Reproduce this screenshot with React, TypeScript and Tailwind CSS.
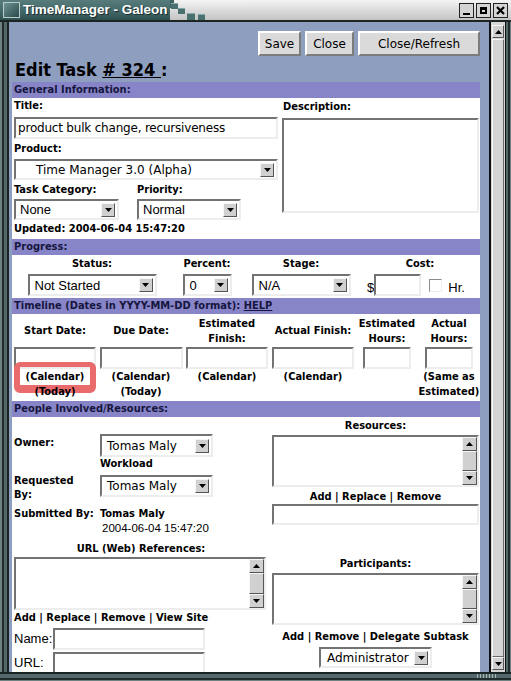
import React from 'react'

const BOLD =
  "font-['DejaVu_Sans_Condensed','DejaVu_Sans',sans-serif] font-stretch-condensed font-bold text-[11px] leading-[14px] whitespace-nowrap"
const DV = "font-['DejaVu_Sans',sans-serif] text-[12px] whitespace-nowrap"
const LS = "font-['Liberation_Sans',Arial,sans-serif] text-[13px] whitespace-nowrap"
const INSET =
  'border-2 border-t-[#737373] border-l-[#737373] border-b-[#ededed] border-r-[#ededed] bg-white'
const OUTSET =
  'border border-t-[#f6f6f6] border-l-[#f6f6f6] border-b-[#555555] border-r-[#555555] bg-[#d0d0d0]'

function Tri({ up = false }: { up?: boolean }) {
  return (
    <svg width="7" height="4" viewBox="0 0 7 4">
      <polygon points={up ? '0,4 7,4 3.5,0' : '0,0 7,0 3.5,4'} fill="#000" />
    </svg>
  )
}

function ArrowBtn({ up = false, className = '' }: { up?: boolean; className?: string }) {
  return (
    <div className={`flex items-center justify-center ${OUTSET} ${className}`}>
      <Tri up={up} />
    </div>
  )
}

function Select({ value, className, font = DV, pad = 'pl-[4px]' }: { value: string; className: string; font?: string; pad?: string }) {
  return (
    <div className={`${INSET} flex items-center ${className}`}>
      <span className={`flex-1 ${pad} ${font} leading-none`}>{value}</span>
      <ArrowBtn className="w-[14px] h-[14px] mr-[2px]" />
    </div>
  )
}

function Input({ className, value = '' }: { className: string; value?: string }) {
  return (
    <div className={`${INSET} flex items-center ${className}`}>
      <span className={`pl-[2px] ${DV} tracking-[-0.2px]`}>{value}</span>
    </div>
  )
}

function ListBox({ className }: { className: string }) {
  return (
    <div className={`${INSET} flex justify-end ${className}`}>
      <div className="w-[15px] flex flex-col bg-[#c4c4c4]">
        <ArrowBtn up className="h-[14px]" />
        <div className={`flex-1 ${OUTSET} bg-[#cdcdcd]`} />
        <ArrowBtn className="h-[14px]" />
      </div>
    </div>
  )
}

function Bar({ children }: { children: React.ReactNode }) {
  return <div className={`h-[16px] bg-[#8785c7] pl-[2px] ${BOLD} leading-[16px] text-[#16163e]`}>{children}</div>
}

function TitleBar() {
  return (
    <div className="h-[22px] flex relative bg-gradient-to-b from-[#f4f4f4] to-[#c4c4c4] border-b-2 border-[#1c2424]">
      <div className="w-[170px] shrink-0 h-full bg-gradient-to-b from-[#587c7c] via-[#456a6a] to-[#2f4f4f] flex items-center pl-[3px] gap-[3px]">
        <div className="w-[17px] h-[16px] shrink-0 bg-gradient-to-br from-[#6f9494] to-[#2c4a4a] border border-[#b9cccc]" />
        <span className="font-['Liberation_Sans',Arial,sans-serif] font-bold text-[13.5px] text-white [text-shadow:1px_1px_0_#1b2e2e] whitespace-nowrap">
          TimeManager - Galeon
        </span>
      </div>
      <svg width="40" height="20" viewBox="0 0 40 20" className="shrink-0">
        <rect x="0" y="0" width="4" height="8" fill="#3f6363" />
        <rect x="1" y="3" width="7" height="6" fill="#4b7070" />
        <rect x="8" y="8" width="7" height="6" fill="#4b7070" />
        <rect x="17" y="13" width="8" height="7" fill="#4b7070" />
        <rect x="28" y="14" width="7" height="6" fill="#4b7070" />
        <rect x="1" y="3" width="7" height="1" fill="#86a8a8" />
        <rect x="8" y="8" width="7" height="1" fill="#86a8a8" />
        <rect x="17" y="13" width="8" height="1" fill="#86a8a8" />
        <rect x="28" y="14" width="7" height="1" fill="#86a8a8" />
      </svg>
      <div className="flex-1" />
      <div className="flex gap-[2px] pt-[3px] pr-[3px]">
        <div className="w-[15px] h-[15px] bg-[#d4d4d4] border border-[#222] flex items-end justify-center pb-[2px]">
          <div className="w-[7px] h-[2px] bg-black" />
        </div>
        <div className="w-[15px] h-[15px] bg-[#d4d4d4] border border-[#222] flex items-center justify-center">
          <div className="w-[7px] h-[7px] border-2 border-t-[3px] border-black" />
        </div>
        <div className="w-[15px] h-[15px] bg-[#d4d4d4] border border-[#222] flex items-center justify-center">
          <svg width="9" height="9" viewBox="0 0 9 9">
            <path d="M1 1 L8 8 M8 1 L1 8" stroke="#000" strokeWidth="2.2" />
          </svg>
        </div>
      </div>
    </div>
  )
}

function WindowScrollbar() {
  return (
    <div className="w-[17px] h-full border-l-2 border-r border-[#111] bg-[#d6d6d6] flex flex-col pt-[3px] pb-[2px] px-[1px]">
      <ArrowBtn up className="h-[13px]" />
      <div className="flex-1 border border-t-[#f6f6f6] border-l-[#f6f6f6] border-b-[#6a6a6a] border-r-[#6a6a6a] bg-[#d4d4d4] mt-px" />
      <ArrowBtn className="h-[13px]" />
    </div>
  )
}

function GeneralInfo() {
  return (
    <div className="h-[141px] bg-white flex pl-[2px]">
      <div className="w-[268px]">
        <div className={`${BOLD} pt-[1px]`}>Title:</div>
        <Input className="w-[264px] h-[22px] mt-[4px]" value="product bulk change, recursiveness" />
        <div className={`${BOLD} mt-[3px]`}>Product:</div>
        <Select className="w-[264px] h-[21px] mt-[3px]" value="Time Manager 3.0 (Alpha)" pad="pl-[20px]" />
        <div className="flex mt-[3px]">
          <div className={`${BOLD} w-[123px]`}>Task Category:</div>
          <div className={BOLD}>Priority:</div>
        </div>
        <div className="flex mt-[2px]">
          <div className="w-[123px]">
            <Select className="w-[105px] h-[21px]" value="None" font={LS} />
          </div>
          <Select className="w-[104px] h-[21px]" value="Normal" font={LS} />
        </div>
        <div className={`${BOLD} mt-[2px]`}>Updated: 2004-06-04 15:47:20</div>
      </div>
      <div className="w-[198px]">
        <div className={`${BOLD} pt-[2px] pl-px`}>Description:</div>
        <div className={`${INSET} w-[197px] h-[95px] mt-[4px]`} />
      </div>
    </div>
  )
}

function Progress() {
  return (
    <div className="h-[43px] bg-white flex">
      <div className="w-[160px] flex flex-col items-center">
        <div className={`${BOLD} pt-[2px]`}>Status:</div>
        <Select className="w-[129px] h-[22px] mt-[3px]" value="Not Started" font={LS} pad="pl-[5px]" />
      </div>
      <div className="w-[70px] flex flex-col items-center">
        <div className={`${BOLD} pt-[2px]`}>Percent:</div>
        <Select className="w-[49px] h-[22px] mt-[3px]" value="0" font={LS} pad="pl-[5px]" />
      </div>
      <div className="w-[118px] flex flex-col items-center">
        <div className={`${BOLD} pt-[2px]`}>Stage:</div>
        <Select className="w-[99px] h-[22px] mt-[3px]" value="N/A" font={LS} pad="pl-[5px]" />
      </div>
      <div className="w-[120px] flex flex-col items-center">
        <div className={`${BOLD} pt-[2px]`}>Cost:</div>
        <div className="flex items-end mt-[3px] pr-[8px]">
          <span className={`${LS} text-[12px] leading-[16px] text-black`}>$</span>
          <div className={`${INSET} w-[47px] h-[22px]`} />
          <div className="w-[13px] h-[13px] ml-[8px] mb-[4px] border border-t-[#8a8a8a] border-l-[#8a8a8a] border-b-[#eeeeee] border-r-[#eeeeee] bg-white" />
          <span className={`${LS} leading-[16px] ml-[6px]`}>Hr.</span>
        </div>
      </div>
    </div>
  )
}

function Timeline() {
  const cols = [
    { w: 'w-[86px]', label: ['Start Date:'], input: 'w-[82px]', sub: ['(Calendar)', '(Today)'] },
    { w: 'w-[86px]', label: ['Due Date:'], input: 'w-[83px]', sub: ['(Calendar)', '(Today)'] },
    { w: 'w-[86px]', label: ['Estimated', 'Finish:'], input: 'w-[82px]', sub: ['(Calendar)'] },
    { w: 'w-[86px]', label: ['Actual Finish:'], input: 'w-[82px]', sub: ['(Calendar)'] },
    { w: 'w-[62px]', label: ['Estimated', 'Hours:'], input: 'w-[48px]', sub: [] },
    { w: 'w-[62px]', label: ['Actual', 'Hours:'], input: 'w-[48px]', sub: ['(Same as', 'Estimated)'] },
  ]
  return (
    <div className="h-[87px] bg-white flex relative">
      {cols.map((c, i) => (
        <div key={i} className={`${c.w} flex flex-col items-center`}>
          <div className="h-[33px] flex flex-col justify-center items-center">
            {c.label.map((l) => (
              <div key={l} className={`${BOLD} leading-[15px]`}>{l}</div>
            ))}
          </div>
          <div className={`${INSET} ${c.input} h-[22px]`} />
          {c.sub.map((s) => (
            <div key={s} className={`${BOLD} leading-[15px] relative z-10`}>{s}</div>
          ))}
        </div>
      ))}
      <div className="absolute left-[2px] top-[48px] w-[82px] h-[31px] rounded-[6px] border-[#e96b6b] border-t-[5px] border-x-[6px] border-b-[8px] pointer-events-none" />
    </div>
  )
}

function People() {
  return (
    <div className="h-[260px] bg-white flex">
      <div className="w-[259px] pl-[2px]">
        <div className="flex mt-[17px]">
          <div className={`${BOLD} w-[86px] pt-[2px]`}>Owner:</div>
          <Select className="w-[113px] h-[23px]" value="Tomas Maly" pad="pl-[5px]" />
        </div>
        <div className={`${BOLD} pl-[86px]`}>Workload</div>
        <div className="flex mt-[3px]">
          <div className={`${BOLD} w-[86px] leading-[13px] whitespace-normal`}>
            Requested
            <br />
            By:
          </div>
          <Select className="w-[113px] h-[22px] mt-px" value="Tomas Maly" pad="pl-[5px]" />
        </div>
        <div className="flex mt-[5px]">
          <div className={`${BOLD} w-[86px]`}>Submitted By:</div>
          <div>
            <div className={BOLD}>Tomas Maly</div>
            <div className="font-['Liberation_Sans',Arial,sans-serif] text-[11.5px] leading-[14px] pl-[2px] whitespace-nowrap">
              2004-06-04 15:47:20
            </div>
          </div>
        </div>
        <div className={`${BOLD} text-center w-[254px] mt-[7px]`}>URL (Web) References:</div>
        <ListBox className="w-[252px] h-[53px] mt-px" />
        <div className={`${BOLD} mt-px`}>Add | Replace | Remove | View Site</div>
        <div className="flex items-center mt-[3px]">
          <span className={`${LS} w-[39px]`}>Name:</span>
          <div className={`${INSET} w-[152px] h-[22px]`} />
        </div>
        <div className="flex items-center mt-[2px]">
          <span className={`${LS} w-[39px]`}>URL:</span>
          <div className={`${INSET} w-[152px] h-[22px]`} />
        </div>
      </div>
      <div className="w-[209px] flex flex-col items-center pt-[2px]">
        <div className={BOLD}>Resources:</div>
        <ListBox className="w-[207px] h-[52px] mt-[2px]" />
        <div className={`${BOLD} mt-[3px]`}>Add | Replace | Remove</div>
        <div className={`${INSET} w-[207px] h-[21px]`} />
        <div className={`${BOLD} mt-[32px]`}>Participants:</div>
        <ListBox className="w-[207px] h-[52px] mt-[2px]" />
        <div className={`${BOLD} mt-[5px]`}>Add | Remove | Delegate Subtask</div>
        <Select className="w-[113px] h-[21px] mt-[3px]" value="Administrator" pad="pl-[6px]" />
      </div>
    </div>
  )
}

export default function App() {
  return (
    <div className="w-[511px] h-[681px] overflow-hidden flex flex-col bg-[#3a4848]">
      <TitleBar />
      <div className="flex h-[650px]">
        {/* left window frame */}
        <div className="w-[9px] h-full flex">
          <div className="w-[2px] bg-[#6e8282]" />
          <div className="w-[2px] bg-[#202b2b]" />
          <div className="w-[3px] bg-[#55696a]" />
          <div className="w-[2px] bg-[#1b2424]" />
        </div>

        <div className="w-[480px] h-full bg-[#8e9ebf] overflow-hidden">
          {/* action buttons */}
          <div className="flex gap-[4px] pt-[9px] ml-[249px]">
            {[
              ['Save', 'w-[43px]'],
              ['Close', 'w-[49px]'],
              ['Close/Refresh', 'w-[122px]'],
            ].map(([t, w]) => (
              <div
                key={t}
                className={`${w} h-[25px] flex items-center justify-center bg-[#dadada] border-2 border-t-white border-l-white border-b-[#7c7c7c] border-r-[#7c7c7c] ${DV}`}
              >
                {t}
              </div>
            ))}
          </div>

          <h1 className="h-[26px] pt-[2px] pl-[6px] font-['DejaVu_Sans_Condensed','DejaVu_Sans',sans-serif] font-stretch-condensed font-bold text-[18px] leading-[24px] whitespace-nowrap">
            Edit Task <span className="underline">#&nbsp;324&nbsp;</span>:
          </h1>

          <div className="ml-[3px] w-[468px]">
            <Bar>General Information:</Bar>
            <GeneralInfo />
            <Bar>Progress:</Bar>
            <Progress />
            <Bar>
              Timeline (Dates in YYYY-MM-DD format): <span className="underline">HELP</span>
            </Bar>
            <Timeline />
            <Bar>People Involved/Resources:</Bar>
            <People />
          </div>
        </div>

        <WindowScrollbar />

        {/* right window frame */}
        <div className="w-[5px] h-full flex">
          <div className="w-[2px] bg-[#55696a]" />
          <div className="w-[2px] bg-[#202b2b]" />
          <div className="w-px bg-[#6e8282]" />
        </div>
      </div>

      {/* bottom window frame */}
      <div className="h-[9px] flex flex-col">
        <div className="h-[2px] bg-[#1b2424]" />
        <div className="h-[4px] bg-[#55696a] flex justify-end pr-[14px]">
          <div className="w-[20px] h-full bg-[repeating-linear-gradient(90deg,#9fb3b3_0_1px,transparent_1px_3px)]" />
        </div>
        <div className="h-[2px] bg-[#202b2b]" />
        <div className="h-px bg-[#6e8282]" />
      </div>
    </div>
  )
}
